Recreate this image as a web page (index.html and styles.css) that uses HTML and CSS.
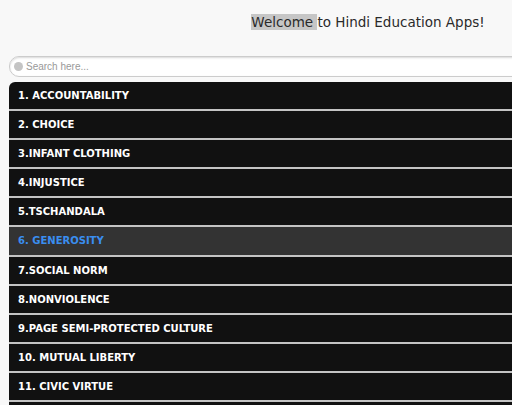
FILE: index.html
```html
<!DOCTYPE html>
<html lang="en">

<head>
    <meta charset="utf-8">
    <meta name="viewport" content="width=device-width, initial-scale=1.0">
    <title>Hindi Education Apps</title>
    <link rel="stylesheet" href="styles.css">
</head>

<body>
    <div class="side">
        <header>
            <h1><span class="mark">Welcome </span>to Hindi Education Apps!</h1>
        </header>
        <form class="search">
            <span class="dot"></span>
            <input type="text" placeholder="Search here...">
        </form>
        <ul class="apps">
            <li>1. ACCOUNTABILITY</li>
            <li>2. CHOICE</li>
            <li>3.INFANT CLOTHING</li>
            <li>4.INJUSTICE</li>
            <li>5.TSCHANDALA</li>
            <li class="valgt">6. GENEROSITY</li>
            <li>7.SOCIAL NORM</li>
            <li>8.NONVIOLENCE</li>
            <li>9.PAGE SEMI-PROTECTED CULTURE</li>
            <li>10. MUTUAL LIBERTY</li>
            <li>11. CIVIC VIRTUE</li>
            <li></li>
        </ul>
    </div>
</body></html>
```

FILE: styles.css
```css
* {
    padding: 0;
    margin: 0;
    box-sizing: border-box;
}

body {
    background-color: #f8f8f8;
    overflow: hidden;
    font-family: 'DejaVu Sans', sans-serif;
}

.side {
    width: 727px;
    padding-left: 9px;
}

header {
    text-align: center;
    padding-top: 12px;
    height: 56px;
}

h1 {
    font-weight: normal;
    font-size: 13.5px;
    color: #2a2a2a;
    line-height: 20px;
}

.mark {
    background-color: #c6c6c6;
}

.search {
    display: flex;
    align-items: center;
    height: 21px;
    background-color: #fff;
    border: 1px solid #ccc;
    border-radius: 10px;
    padding-left: 4px;
    box-shadow: inset 0 1px 2px rgba(0, 0, 0, 0.15);
}

.dot {
    width: 9px;
    height: 9px;
    border-radius: 50%;
    background-color: #c4c4c4;
}

.search input {
    border: none;
    outline: none;
    background: transparent;
    font-family: 'Liberation Sans', sans-serif;
    font-size: 10px;
    padding-left: 3px;
}

.search input::placeholder {
    color: #999;
}

.apps {
    list-style: none;
    margin-top: 5px;
    border-radius: 6px 0 0 0;
    overflow: hidden;
}

.apps li {
    height: 29.1px;
    line-height: 28px;
    padding-left: 9px;
    background-color: #111;
    color: #fff;
    font-weight: bold;
    font-size: 10px;
    border-bottom: 2px solid #c4c4c4;
}

.apps li.valgt {
    background-color: #333;
    color: #3a8ef0;
}
```
